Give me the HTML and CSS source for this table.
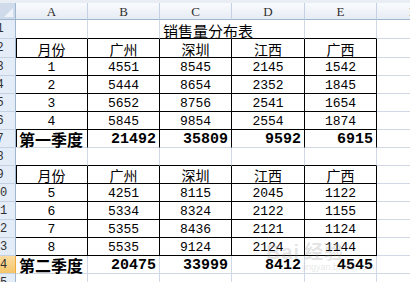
FILE: index.html
```html
<!DOCTYPE html>
<html lang="zh">
<head>
<meta charset="utf-8">
<link rel="stylesheet" href="styles.css">
</head>
<body>
<div class="sheet">
  <!-- column headers -->
  <div class="corner"><span class="tri"></span></div>
  <div class="ch">A</div><div class="ch">B</div><div class="ch">C</div><div class="ch">D</div><div class="ch">E</div><div class="ch">F</div>

  <!-- row 1 -->
  <div class="rh"><span>1</span></div>
  <div class="c bb"></div><div class="c bb"></div>
  <div class="c bb title nr">销售量分布表</div>
  <div class="c bb"></div><div class="c bb"></div><div class="c"></div>

  <!-- row 2 -->
  <div class="rh"><span>2</span></div>
  <div class="c t bl cn">月份</div><div class="c t cn">广州</div><div class="c t cn">深圳</div><div class="c t cn">江西</div><div class="c t cn">广西</div><div class="c"></div>

  <div class="rh"><span>3</span></div>
  <div class="c t num">1</div><div class="c t num">4551</div><div class="c t num">8545</div><div class="c t num">2145</div><div class="c t num">1542</div><div class="c"></div>

  <div class="rh"><span>4</span></div>
  <div class="c t num">2</div><div class="c t num">5444</div><div class="c t num">8654</div><div class="c t num">2352</div><div class="c t num">1845</div><div class="c"></div>

  <div class="rh"><span>5</span></div>
  <div class="c t num">3</div><div class="c t num">5652</div><div class="c t num">8756</div><div class="c t num">2541</div><div class="c t num">1654</div><div class="c"></div>

  <div class="rh"><span>6</span></div>
  <div class="c t num">4</div><div class="c t num">5845</div><div class="c t num">9854</div><div class="c t num">2554</div><div class="c t num">1874</div><div class="c"></div>

  <!-- row 7 total -->
  <div class="rh"><span>7</span></div>
  <div class="c br bl tl">第一季度</div><div class="c br tn">21492</div><div class="c br tn">35809</div><div class="c br tn">9592</div><div class="c br tn">6915</div><div class="c"></div>

  <!-- row 8 -->
  <div class="rh"><span>8</span></div>
  <div class="c bb"></div><div class="c bb"></div><div class="c bb"></div><div class="c bb"></div><div class="c bb"></div><div class="c"></div>

  <!-- table 2 -->
  <div class="rh"><span>9</span></div>
  <div class="c t bl cn">月份</div><div class="c t cn">广州</div><div class="c t cn">深圳</div><div class="c t cn">江西</div><div class="c t cn">广西</div><div class="c"></div>

  <div class="rh"><span>10</span></div>
  <div class="c t num">5</div><div class="c t num">4251</div><div class="c t num">8115</div><div class="c t num">2045</div><div class="c t num">1122</div><div class="c"></div>

  <div class="rh"><span>11</span></div>
  <div class="c t num">6</div><div class="c t num">5334</div><div class="c t num">8324</div><div class="c t num">2122</div><div class="c t num">1155</div><div class="c"></div>

  <div class="rh"><span>12</span></div>
  <div class="c t num">7</div><div class="c t num">5355</div><div class="c t num">8436</div><div class="c t num">2121</div><div class="c t num">1124</div><div class="c"></div>

  <div class="rh"><span>13</span></div>
  <div class="c t num">8</div><div class="c t num">5535</div><div class="c t num">9124</div><div class="c t num">2124</div><div class="c t num">1144</div><div class="c"></div>

  <div class="rh sel"><span>14</span></div>
  <div class="c tl">第二季度</div><div class="c tn">20475</div><div class="c tn">33999</div><div class="c tn">8412</div><div class="c tn">4545</div><div class="c"></div>

  <div class="rh"><span>15</span></div>
  <div class="c"></div><div class="c"></div><div class="c"></div><div class="c"></div><div class="c"></div><div class="c"></div>
</div>
<div class="watermark"><span class="wm-big">Bai<span class="wm-cn">经验</span></span><span class="wm-small">jingyan.baidu.com</span></div>
</body>
</html>
```

FILE: styles.css
```css
html, body {
  margin: 0;
  padding: 0;
  background: #ffffff;
  overflow: hidden;
  width: 410px;
  height: 282px;
}

body {
  position: relative;
}

.sheet {
  display: grid;
  grid-template-columns: 16px 72px 72px 72px 73px 72px 72px;
  grid-template-rows: 17px 19px 19px repeat(13, 18px);
  border-top: 3px solid #e9eef5;
  width: 449px;
  font-family: "Liberation Mono", monospace;
  color: #000;
}

.sheet > div {
  box-sizing: border-box;
  display: flex;
  align-items: center;
  justify-content: center;
  white-space: nowrap;
  line-height: 1;
}

.corner {
  background: #cfdbeb;
  border-right: 1px solid #9eb6ce;
  border-bottom: 1px solid #9eb6ce;
  position: relative;
}

.tri {
  position: absolute;
  right: 2px;
  bottom: 2px;
  width: 0;
  height: 0;
  border-left: 9px solid transparent;
  border-bottom: 9px solid #eef3f9;
}

.ch {
  background: linear-gradient(#f9fbfd, #e6ecf4);
  border-right: 1px solid #c3d1e2;
  border-bottom: 1px solid #9eb6ce;
  font-family: "Liberation Serif", serif;
  font-size: 13px;
  color: #303030;
  padding-top: 1px;
}

.rh {
  background: #e4ecf7;
  border-right: 1px solid #9eb6ce;
  border-bottom: 1px solid #c3d1e2;
  overflow: hidden;
  font-size: 12px;
  color: #303030;
}

.sheet > .rh {
  justify-content: flex-start;
}

.rh span {
  flex: none;
  width: 32px;
  margin-left: -16px;
  text-align: center;
}

.rh.sel {
  background: linear-gradient(#fbdc9f, #f4c56c);
  border-right-color: #f0a93b;
}

.c {
  border-right: 1px solid #d0d7e5;
  border-bottom: 1px solid #d0d7e5;
  overflow: visible;
}

.bb {
  border-bottom-color: #000;
}

.br {
  border-right-color: #000;
}

.t {
  border-right-color: #000;
  border-bottom-color: #000;
}

.bl {
  box-shadow: inset 1px 0 0 #000;
}

.nr {
  border-right-color: transparent;
}

.sheet > .title {
  justify-content: flex-start;
  padding-left: 3px;
  padding-top: 2px;
  font-family: "Noto Sans CJK SC", sans-serif;
  font-size: 15px;
  position: relative;
  z-index: 1;
}

.cn {
  font-family: "Noto Sans CJK SC", sans-serif;
  font-size: 14px;
  padding-top: 1px;
}

.num {
  font-size: 13px;
  padding-top: 2px;
}

.sheet > .tl {
  justify-content: flex-start;
  padding-left: 3px;
  font-family: "Noto Sans CJK SC", sans-serif;
  font-size: 16px;
  font-weight: bold;
}

.sheet > .tn {
  justify-content: flex-end;
  padding-right: 3px;
  font-size: 15px;
  font-weight: bold;
  padding-top: 2px;
}

.watermark {
  position: absolute;
  left: 266px;
  top: 241px;
  display: flex;
  flex-direction: column;
  color: rgba(150, 150, 150, 0.25);
  font-family: "Liberation Sans", sans-serif;
  pointer-events: none;
}

.wm-big {
  font-size: 20px;
  font-weight: bold;
  line-height: 20px;
  letter-spacing: 1px;
}

.wm-cn {
  font-family: "Noto Sans CJK SC", sans-serif;
  font-size: 19px;
  margin-left: 4px;
}

.wm-small {
  font-size: 9px;
  line-height: 10px;
  margin-left: 36px;
}
```
